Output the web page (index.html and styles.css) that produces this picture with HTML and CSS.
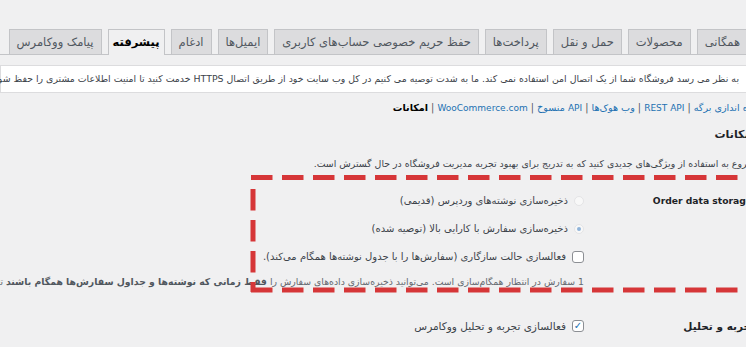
FILE: index.html
```html
<!DOCTYPE html>
<html lang="fa" dir="rtl">
<head>
    <meta charset="UTF-8" />
    <meta name="viewport" content="width=device-width, initial-scale=1" />
    <title>تنظیمات ووکامرس - پیشرفته</title>
    <link rel="stylesheet" href="styles.css">
</head>
<body>

    <div class="wrap">
        <!-- Settings tabs -->
        <nav class="nav-tab-wrapper">
            <a href="#" class="nav-tab">همگانی</a>
            <a href="#" class="nav-tab">محصولات</a>
            <a href="#" class="nav-tab">حمل و نقل</a>
            <a href="#" class="nav-tab">پرداخت‌ها</a>
            <a href="#" class="nav-tab">حفظ حریم خصوصی حساب‌های کاربری</a>
            <a href="#" class="nav-tab">ایمیل‌ها</a>
            <a href="#" class="nav-tab">ادغام</a>
            <a href="#" class="nav-tab nav-tab-active">پیشرفته</a>
            <a href="#" class="nav-tab">پیامک ووکامرس</a>
        </nav>

        <div class="notice">
            <p>به نظر می رسد فروشگاه شما از یک اتصال امن استفاده نمی کند. ما به شدت توصیه می کنیم در کل وب سایت خود از طریق اتصال HTTPS خدمت کنید تا امنیت اطلاعات مشتری را حفظ شود. <a href="#">بیشتر بدانید</a></p>
        </div>

        <ul class="subsubsub">
            <li><a href="#">راه اندازی برگه</a> | </li>
            <li><a href="#" class="en">REST API</a> | </li>
            <li><a href="#">وب هوک‌ها</a> | </li>
            <li><a href="#"><span class="en">API</span> منسوخ</a> | </li>
            <li><a href="#" class="en">WooCommerce.com</a> | </li>
            <li><a href="#" class="current">امکانات</a></li>
        </ul>

        <h2 class="section-title">امکانات</h2>
        <p class="section-desc">شروع به استفاده از ویژگی‌های جدیدی کنید که به تدریج برای بهبود تجربه مدیریت فروشگاه در حال گسترش است.</p>

        <table class="form-table">
            <tr>
                <th class="en">Order data storage</th>
                <td>
                    <label class="choice"><span class="radio"></span>ذخیره‌سازی نوشته‌های وردپرس (قدیمی)</label>
                    <label class="choice"><span class="radio checked"></span>ذخیره‌سازی سفارش با کارایی بالا (توصیه شده)</label>
                    <label class="choice choice-check"><span class="checkbox"></span>فعالسازی حالت سازگاری (سفارش‌ها را با جدول نوشته‌ها همگام می‌کند).</label>
                    <p class="description">1 سفارش در انتظار همگام‌سازی است. می‌توانید ذخیره‌سازی داده‌های سفارش را <strong>فقط زمانی که نوشته‌ها و جداول سفارش‌ها همگام باشند</strong> تغییر دهید.</p>
                </td>
            </tr>
            <tr>
                <th>تجربه و تحلیل</th>
                <td>
                    <label class="choice choice-small"><span class="checkbox on">✓</span>فعالسازی تجربه و تحلیل ووکامرس</label>
                </td>
            </tr>
        </table>
    </div>

    <!-- red highlight drawn over the screenshot -->
    <svg class="highlight" width="746" height="347" viewBox="0 0 746 347">
        <line x1="251" y1="177.5" x2="760" y2="177.5" />
        <line x1="253" y1="189" x2="253" y2="292" />
        <line x1="251" y1="290" x2="760" y2="290" />
    </svg>

</body>
</html>
```

FILE: styles.css
```css
* {
    margin: 0;
    padding: 0;
    box-sizing: border-box;
}
html, body {
    overflow: hidden;
}
body {
    background: #f0f0f1;
    color: #3c434a;
    font-family: "DejaVu Sans", sans-serif;
    font-size: 9.4px;
    width: 746px;
    height: 347px;
    position: relative;
}
a {
    color: #2271b1;
    text-decoration: none;
}
/* Page wrap sticks out past the right edge like the cropped shot */
.wrap {
    margin-right: -9px;
    white-space: nowrap;
}

/* Tabs */
.nav-tab-wrapper {
    display: flex;
    gap: 6px;
    padding: 29px 7px 0 0;
    border-bottom: 1px solid #c3c4c7;
    height: 55px;
}
.nav-tab {
    display: block;
    height: 25px;
    line-height: 24px;
    padding: 0 7px;
    font-size: 11.5px;
    color: #50575e;
    background: #dcdcde;
    border: 1px solid #c3c4c7;
    border-bottom: none;
}
.nav-tab-active {
    background: #f0f0f1;
    color: #000;
    font-weight: 700;
    height: 26px;
    padding: 0 4px;
}

/* Notice */
.notice {
    margin-top: 10px;
    background: #fff;
    border: 1px solid #dcdcde;
    border-right: 4px solid #d63638;
    height: 28px;
    padding: 0 12px;
}
.notice p {
    line-height: 26px;
    color: #3c434a;
}

/* Sub links */
.subsubsub {
    list-style: none;
    display: flex;
    margin-top: 6px;
    line-height: 18px;
    color: #50575e;
    font-size: 9.6px;
}
.subsubsub li {
    white-space: pre;
}
.subsubsub .en {
    font-size: 9px;
}
.subsubsub .current {
    color: #000;
    font-weight: 700;
}

.section-title {
    font-size: 11px;
    font-weight: 700;
    color: #1d2327;
    line-height: 16px;
    margin-top: 10px;
}
.section-desc {
    line-height: 16px;
    margin-top: 13px;
}

/* Form table */
.form-table {
    border-collapse: collapse;
    table-layout: fixed;
    width: 100%;
    margin-top: 20px;
}
.form-table th {
    width: 171px;
    text-align: right;
    vertical-align: top;
    font-size: 10.5px;
    font-weight: 700;
    color: #1d2327;
    line-height: 18px;
    padding: 0;
}
.form-table th.en {
    font-size: 9.2px;
    padding-right: 3px;
}
.form-table td {
    vertical-align: top;
    padding: 0;
    line-height: 18px;
    font-size: 10px;
}
.form-table tr + tr th,
.form-table tr + tr td {
    padding-top: 27px;
}
.choice {
    display: flex;
    align-items: center;
    gap: 6px;
    height: 18px;
    margin-bottom: 10px;
}
.choice-check {
    margin-top: 2px;
    margin-bottom: 8px;
}
.choice-small {
    font-size: 10.5px;
    margin: 0;
}
.radio {
    width: 10px;
    height: 10px;
    border-radius: 50%;
    border: 1px solid #e4e4e6;
    background: #f8f8f8;
    position: relative;
}
.radio.checked::after {
    content: "";
    position: absolute;
    top: 2px;
    left: 2px;
    width: 4px;
    height: 4px;
    border-radius: 50%;
    background: #8fb3d9;
}
.checkbox {
    width: 12px;
    height: 12px;
    border-radius: 3px;
    border: 1px solid #8c8f94;
    background: #fff;
    font-size: 10px;
    line-height: 10px;
    text-align: center;
    color: #2271b1;
}
.description {
    color: #646970;
    line-height: 16px;
    font-size: 9.3px;
}
.description strong {
    color: #50575e;
}

/* Red dashed annotation */
.highlight {
    position: absolute;
    top: 0;
    left: 0;
    pointer-events: none;
}
.highlight line {
    stroke: #d63638;
    stroke-width: 5;
    stroke-dasharray: 21.5 9.5;
}
```
